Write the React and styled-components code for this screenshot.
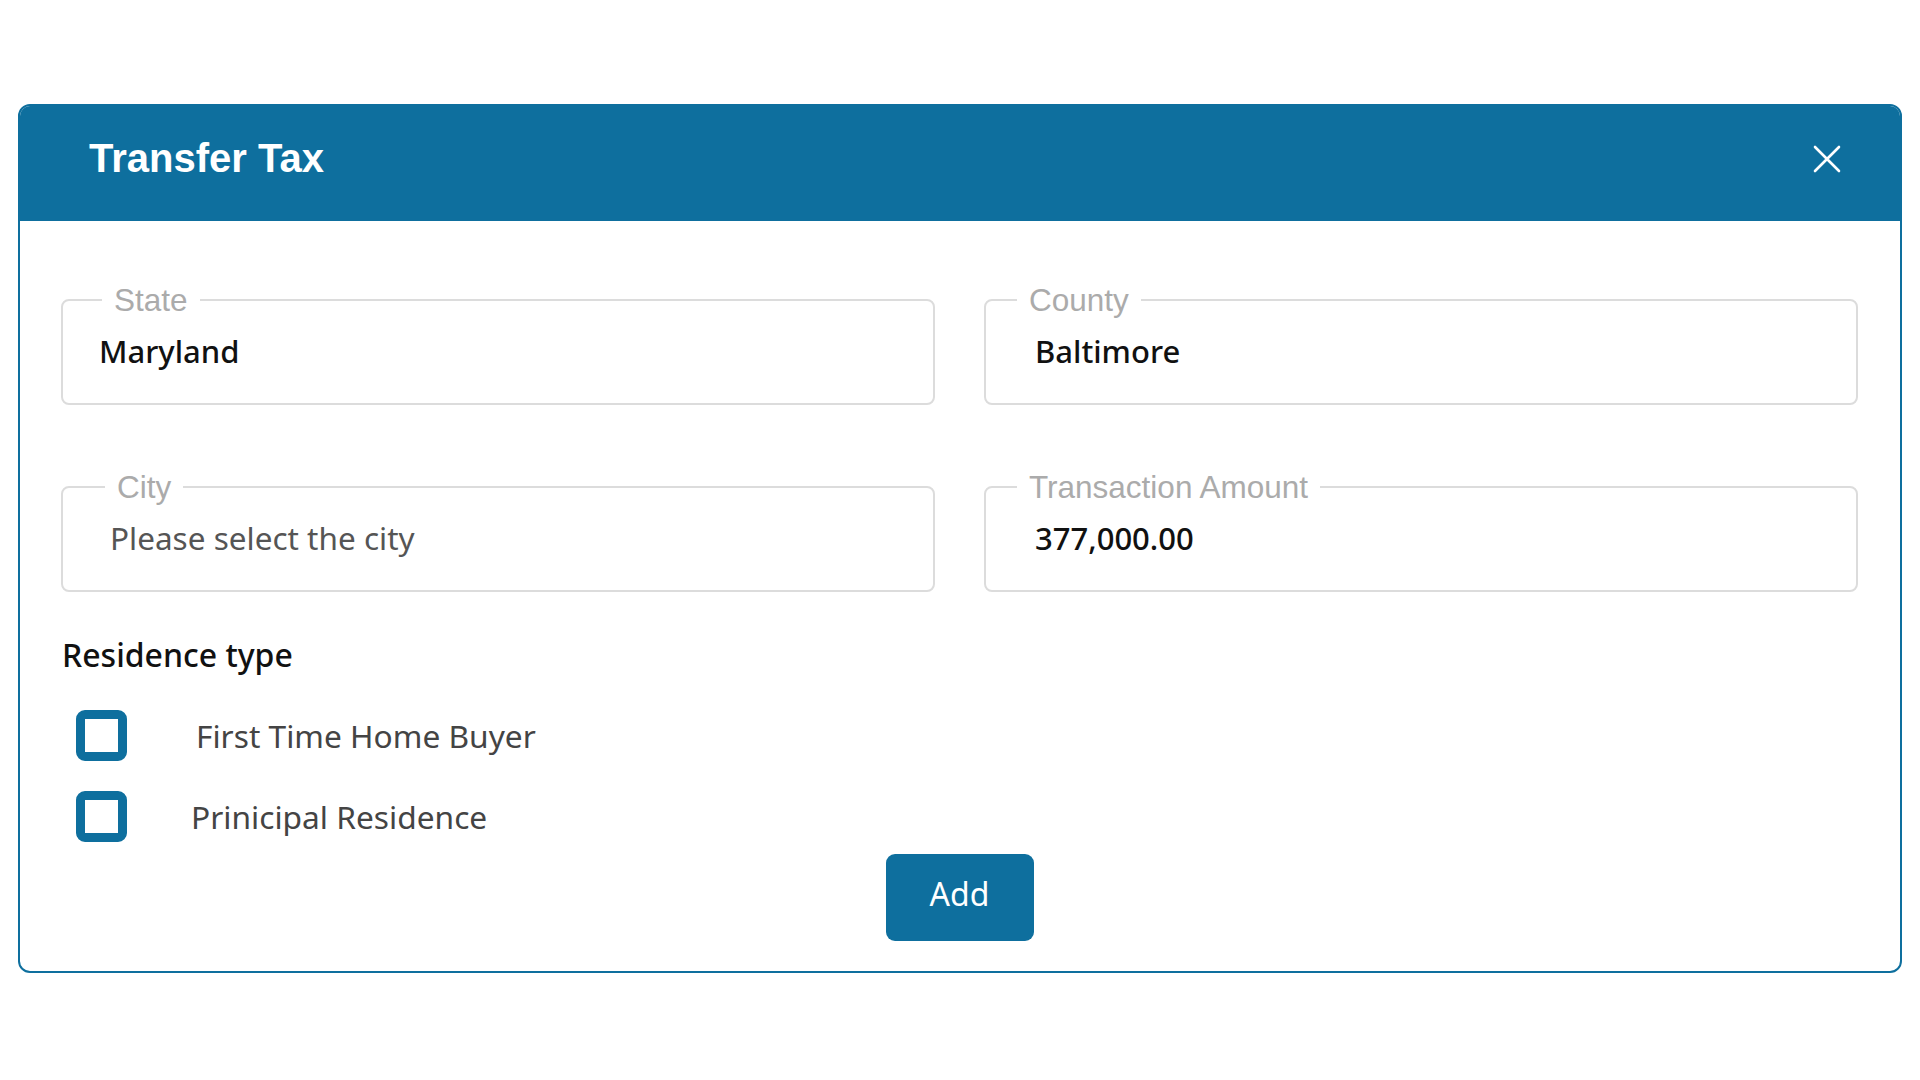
import React from 'react'
import styled, { createGlobalStyle } from 'styled-components'

const GlobalStyle = createGlobalStyle`
  html, body {
    margin: 0;
    padding: 0;
    background: #fff;
  }
  body {
    font-family: "Noto Sans", "Liberation Sans", sans-serif;
  }
`;

const Page = styled.div`
  width: 1920px;
  height: 1080px;
  padding: 104px 18px 0 18px;
  box-sizing: border-box;
`;

const Modal = styled.section`
  border: 2px solid #0e6f9e;
  border-radius: 12px;
  overflow: hidden;
  background: #fff;
`;

const Header = styled.header`
  height: 117px;
  background-color: #0e6f9e;
  display: flex;
  align-items: center;
  justify-content: space-between;
  padding: 0 59px 8px 69px;
  box-sizing: border-box;
  margin-top: -2px;
`;

const Title = styled.h1`
  margin: 0;
  color: #fff;
  font-family: "Liberation Sans", Arial, sans-serif;
  font-weight: 700;
  font-size: 40px;
`;

const CloseButton = styled.button`
  background: none;
  border: 0;
  padding: 0;
  width: 28px;
  height: 28px;
  cursor: pointer;
  display: flex;
`;

const Body = styled.div`
  padding: 63px 42px 30px 41px;
`;

const FieldGrid = styled.div`
  display: grid;
  grid-template-columns: 1fr 1fr;
  column-gap: 49px;
  row-gap: 66px;
`;

const Field = styled.fieldset`
  margin: 0;
  min-inline-size: 0;
  border: 2px solid #dcdcdc;
  border-radius: 8px;
  padding: 0 ${p => p.$indent}px;
  height: 121px;
  box-sizing: border-box;
  display: flex;
  align-items: center;
`;

const Legend = styled.legend`
  margin-left: ${p => p.$shift}px;
  padding: 0 12px;
  font-family: "Liberation Sans", Arial, sans-serif;
  font-size: 31.5px;
  line-height: 32px;
  color: #ababab;
`;

const Value = styled.div`
  font-size: ${p => (p.$placeholder ? 31.5 : 31)}px;
  font-weight: ${p => (p.$placeholder ? 400 : 500)};
  color: ${p => (p.$placeholder ? '#555' : '#111')};
  padding-bottom: 18px;
`;

const SectionTitle = styled.h2`
  margin: 44px 0 0 1px;
  font-size: 32px;
  line-height: 38px;
  font-weight: 500;
  color: #111;
`;

const CheckList = styled.div`
  display: flex;
  flex-direction: column;
  gap: 30px;
  margin-top: 36px;
  padding-left: 15px;
`;

const CheckRow = styled.label`
  display: flex;
  align-items: center;
  gap: ${p => p.$gap}px;
  cursor: pointer;
`;

const Box = styled.span`
  width: 51px;
  height: 51px;
  box-sizing: border-box;
  border: 9px solid #0e6f9e;
  border-radius: 9px;
  background: #fff;
  flex: none;
`;

const CheckText = styled.span`
  font-size: 31.7px;
  color: #444;
`;

const Actions = styled.div`
  display: flex;
  justify-content: center;
  margin-top: 12px;
`;

const AddButton = styled.button`
  width: 148px;
  height: 87px;
  border: 0;
  border-radius: 9px;
  background: #0e6f9e;
  color: #fff;
  font-family: "Noto Sans", sans-serif;
  font-size: 32px;
  padding: 0 0 8px;
  cursor: pointer;
`;

const fields = [
  { label: 'State', value: 'Maryland', indent: 36, shift: 3 },
  { label: 'County', value: 'Baltimore', indent: 49, shift: -18 },
  { label: 'City', value: 'Please select the city', indent: 47, shift: -5, placeholder: true },
  { label: 'Transaction Amount', value: '377,000.00', indent: 49, shift: -18 },
];

export default function App() {
  return (
    <Page>
      <GlobalStyle />
      <Modal>
        <Header>
          <Title>Transfer Tax</Title>
          <CloseButton aria-label="Close">
            <svg width="28" height="28" viewBox="0 0 28 28">
              <path d="M2 2L26 26M26 2L2 26" stroke="#fff" strokeWidth="2.6" strokeLinecap="round" />
            </svg>
          </CloseButton>
        </Header>
        <Body>
          <FieldGrid>
            {fields.map(f => (
              <Field key={f.label} $indent={f.indent}>
                <Legend $shift={f.shift}>{f.label}</Legend>
                <Value $placeholder={f.placeholder}>{f.value}</Value>
              </Field>
            ))}
          </FieldGrid>
          <SectionTitle>Residence type</SectionTitle>
          <CheckList>
            <CheckRow $gap={69}>
              <Box />
              <CheckText>First Time Home Buyer</CheckText>
            </CheckRow>
            <CheckRow $gap={64}>
              <Box />
              <CheckText>Prinicipal Residence</CheckText>
            </CheckRow>
          </CheckList>
          <Actions>
            <AddButton>Add</AddButton>
          </Actions>
        </Body>
      </Modal>
    </Page>
  )
}
